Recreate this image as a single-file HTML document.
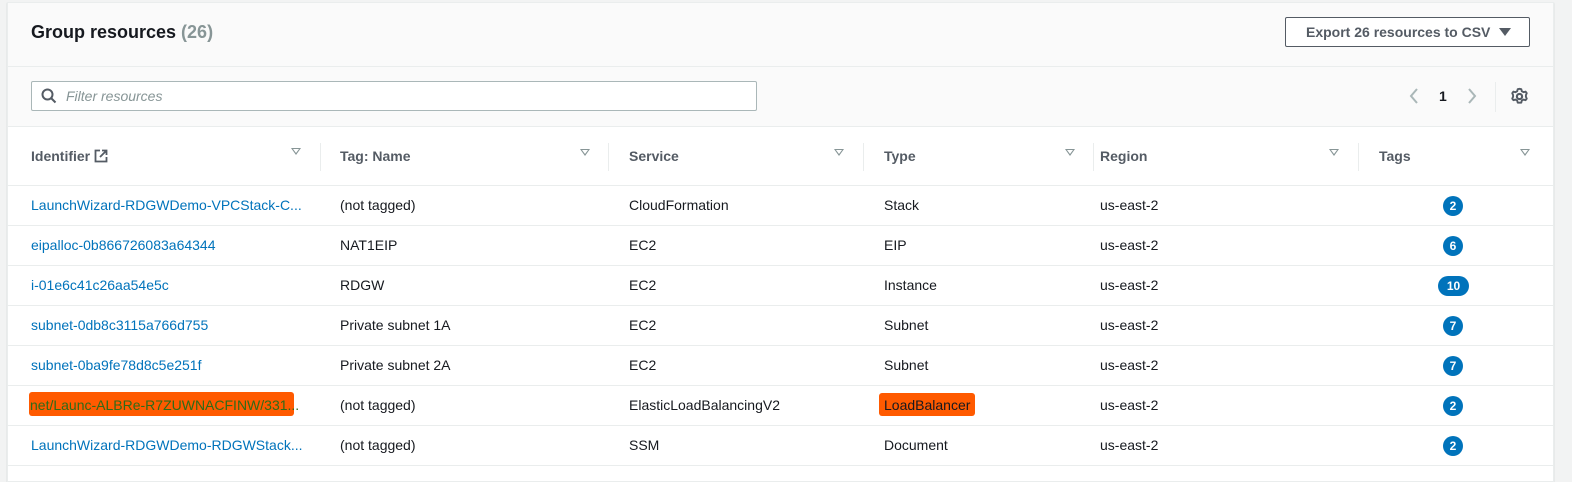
<!DOCTYPE html>
<html><head><style>
*{box-sizing:border-box;margin:0;padding:0}
body{width:1572px;height:475px;background:#f2f3f3;font-family:"Liberation Sans",sans-serif;font-size:14px;color:#16191f;overflow:hidden;position:relative}
.card{position:absolute;left:7px;top:2px;width:1547px;height:480px;background:#fff;border:1px solid #eaeded;box-shadow:0 1px 1px rgba(0,28,36,.2)}
.hdr{position:absolute;left:0;top:0;width:100%;height:64px;background:#fafafa;border-bottom:1px solid #eaeded}
.title{position:absolute;left:23px;top:19px;font-size:18px;font-weight:bold;color:#16191f}
.title span{color:#879596;font-weight:bold}
.btn{position:absolute;left:1277px;top:14px;width:245px;height:30px;border:1px solid #545b64;border-radius:2px;background:#fff;font-weight:bold;color:#545b64;font-size:14px;line-height:28px;padding-left:20px}
.btn i{position:absolute;right:18px;top:10px;width:0;height:0;border-left:6px solid transparent;border-right:6px solid transparent;border-top:8px solid #545b64}
.tool{position:absolute;left:0;top:64px;width:100%;height:60px;background:#fafafa;border-bottom:1px solid #eaeded}
.filter{position:absolute;left:23px;top:14px;width:726px;height:30px;border:1px solid #aab7b8;border-radius:2px;background:#fff}
.filter span{position:absolute;left:34px;top:6px;font-style:italic;color:#879596}
.row,.th{position:absolute;left:0;width:100%;border-bottom:1px solid #eaeded}
.th{top:124px;height:59px;font-weight:bold;color:#545b64}
.c{position:absolute;white-space:nowrap}
.row .c{top:11px}
.sep{position:absolute;top:16px;width:1px;height:28px;background:#eaeded}
.tri{position:absolute;top:22px;width:0;height:0;border-left:5px solid transparent;border-right:5px solid transparent;border-top:7px solid #879596}
.tri:after{content:"";position:absolute;left:-3px;top:-6px;border-left:3px solid transparent;border-right:3px solid transparent;border-top:4px solid #fff}
a{color:#0073bb;text-decoration:none}
.b{position:absolute;height:20px;min-width:20px;padding:0 5px;border-radius:10px;background:#0073bb;color:#fff;font-size:12px;font-weight:bold;line-height:20px;text-align:center}
</style></head><body>
<div class="card">
<div class="hdr"><div class="title">Group resources <span>(26)</span></div>
<div class="btn">Export 26 resources to CSV<i></i></div></div>
<div class="tool"><div class="filter">
<svg style="position:absolute;left:9px;top:6px" width="16" height="16" viewBox="0 0 16 16"><circle cx="6.5" cy="6.5" r="5" fill="none" stroke="#545b64" stroke-width="2"/><path d="M10 10l4.5 4.5" stroke="#545b64" stroke-width="2"/></svg>
<span>Filter resources</span></div>
<svg style="position:absolute;left:1400px;top:21px" width="12" height="16"><path d="M9 1L3 8l6 7" fill="none" stroke="#aab7b8" stroke-width="2"/></svg>
<div class="c" style="left:1431px;top:21px;font-weight:bold">1</div>
<svg style="position:absolute;left:1458px;top:21px" width="12" height="16"><path d="M3 1l6 7-6 7" fill="none" stroke="#aab7b8" stroke-width="2"/></svg>
<div style="position:absolute;left:1487px;top:15px;width:1px;height:30px;background:#eaeded"></div>
<svg style="position:absolute;left:1502px;top:20px" width="19" height="19" viewBox="0 0 16 16"><circle cx="8" cy="8" r="2.2" fill="none" stroke="#545b64" stroke-width="1.8"/><path d="M8 1.5l1.5.3.4 1.7 1.5.9 1.7-.5 1 1.3-.7 1.6v1.4l.7 1.6-1 1.3-1.7-.5-1.5.9-.4 1.7H6.5l-.4-1.7-1.5-.9-1.7.5-1-1.3.7-1.6V6.8l-.7-1.6 1-1.3 1.7.5 1.5-.9.4-1.7z" fill="none" stroke="#545b64" stroke-width="1.6" stroke-linejoin="round"/></svg>
</div>
<div class="th">
<div class="c" style="left:23px;top:21px">Identifier <svg width="14" height="14" style="vertical-align:-2px" viewBox="0 0 14 14"><path d="M6 1.5H1.5v11h11V8M8 1.5h4.5V6M12.5 1.5L6 8" fill="none" stroke="#545b64" stroke-width="1.8"/></svg></div>
<div class="tri" style="left:283px;top:21px"></div><div class="sep" style="left:312px"></div>
<div class="c" style="left:332px;top:21px">Tag: Name</div><div class="tri" style="left:572px"></div><div class="sep" style="left:600px"></div>
<div class="c" style="left:621px;top:21px">Service</div><div class="tri" style="left:826px"></div><div class="sep" style="left:855px"></div>
<div class="c" style="left:876px;top:21px">Type</div><div class="tri" style="left:1057px"></div><div class="sep" style="left:1085px"></div>
<div class="c" style="left:1092px;top:21px">Region</div><div class="tri" style="left:1321px"></div><div class="sep" style="left:1350px"></div>
<div class="c" style="left:1371px;top:21px">Tags</div><div class="tri" style="left:1512px"></div>
</div>
<div class="row" style="top:183px;height:40px"><a class="c" style="left:23px">LaunchWizard-RDGWDemo-VPCStack-C...</a><div class="c" style="left:332px">(not tagged)</div><div class="c" style="left:621px">CloudFormation</div><div class="c" style="left:876px">Stack</div><div class="c" style="left:1092px">us-east-2</div><div class="b" style="left:1435px;top:10px">2</div></div>
<div class="row" style="top:223px;height:40px"><a class="c" style="left:23px">eipalloc-0b866726083a64344</a><div class="c" style="left:332px">NAT1EIP</div><div class="c" style="left:621px">EC2</div><div class="c" style="left:876px">EIP</div><div class="c" style="left:1092px">us-east-2</div><div class="b" style="left:1435px;top:10px">6</div></div>
<div class="row" style="top:263px;height:40px"><a class="c" style="left:23px">i-01e6c41c26aa54e5c</a><div class="c" style="left:332px">RDGW</div><div class="c" style="left:621px">EC2</div><div class="c" style="left:876px">Instance</div><div class="c" style="left:1092px">us-east-2</div><div class="b" style="left:1430px;top:10px;width:31px">10</div></div>
<div class="row" style="top:303px;height:40px"><a class="c" style="left:23px">subnet-0db8c3115a766d755</a><div class="c" style="left:332px">Private subnet 1A</div><div class="c" style="left:621px">EC2</div><div class="c" style="left:876px">Subnet</div><div class="c" style="left:1092px">us-east-2</div><div class="b" style="left:1435px;top:10px">7</div></div>
<div class="row" style="top:343px;height:40px"><a class="c" style="left:23px">subnet-0ba9fe78d8c5e251f</a><div class="c" style="left:332px">Private subnet 2A</div><div class="c" style="left:621px">EC2</div><div class="c" style="left:876px">Subnet</div><div class="c" style="left:1092px">us-east-2</div><div class="b" style="left:1435px;top:10px">7</div></div>
<div class="row" style="top:383px;height:40px"><div style="position:absolute;left:21px;top:6px;width:265px;height:24px;background:#ff5a00;border-radius:3px"></div><div class="c" style="left:22px;color:#2f6b18">net/Launc-ALBRe-R7ZUWNACFINW/331...</div><div class="c" style="left:332px">(not tagged)</div><div class="c" style="left:621px">ElasticLoadBalancingV2</div><div style="position:absolute;left:871px;top:7px;width:96px;height:23px;background:#ff5a00;border-radius:3px"></div><div class="c" style="left:876px">LoadBalancer</div><div class="c" style="left:1092px">us-east-2</div><div class="b" style="left:1435px;top:10px">2</div></div>
<div class="row" style="top:423px;height:40px"><a class="c" style="left:23px">LaunchWizard-RDGWDemo-RDGWStack...</a><div class="c" style="left:332px">(not tagged)</div><div class="c" style="left:621px">SSM</div><div class="c" style="left:876px">Document</div><div class="c" style="left:1092px">us-east-2</div><div class="b" style="left:1435px;top:10px">2</div></div>
</div>
</body></html>
